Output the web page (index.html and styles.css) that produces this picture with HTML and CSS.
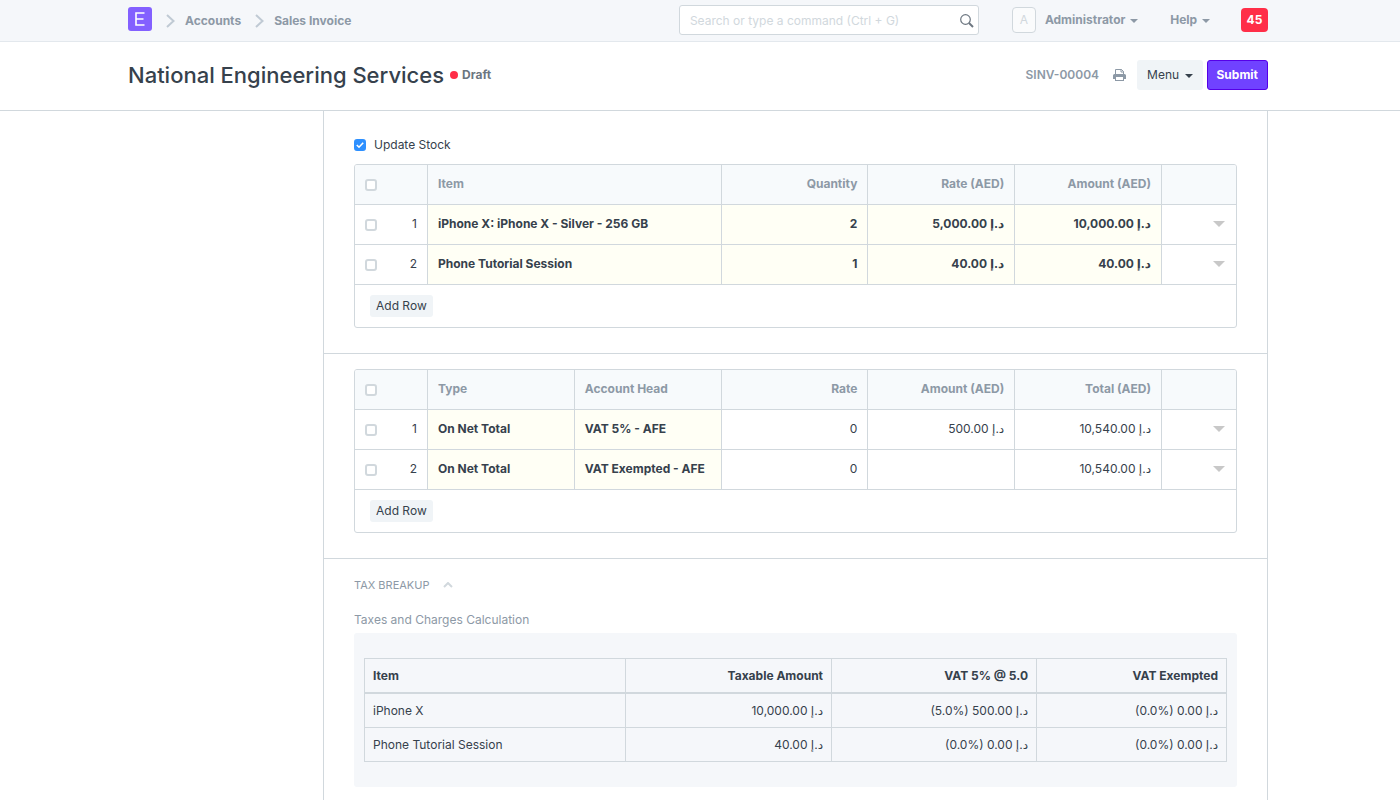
FILE: index.html
```html
<!DOCTYPE html>
<html lang="en">

<head>
    <meta charset="UTF-8">
    <meta name="viewport" content="width=device-width, initial-scale=1.0">
    <title>National Engineering Services</title>
    <link rel="stylesheet" href="styles.css">
</head>

<body>
    <header class="navbar">
        <div class="container">
            <a href="#" class="logo" aria-label="Home">
                <svg width="24" height="24" viewBox="0 0 24 24">
                    <rect width="24" height="24" rx="3" fill="#8360ff" />
                    <path d="M16.500 6H8v12h8.500M8 12h7.500" fill="none" stroke="#fff" stroke-width="1.600" />
                </svg>
            </a>
            <nav class="breadcrumbs">
                <svg class="chevron" width="9" height="14" viewBox="0 0 9 14"><path d="M1 1l6.500 6L1 13" /></svg>
                <a href="#">Accounts</a>
                <svg class="chevron" width="9" height="14" viewBox="0 0 9 14"><path d="M1 1l6.500 6L1 13" /></svg>
                <a href="#">Sales Invoice</a>
            </nav>
            <form class="search">
                <input type="text" aria-label="Search" placeholder="Search or type a command (Ctrl + G)">
                <svg width="14" height="14" viewBox="0 0 14 14">
                    <circle cx="5.500" cy="5.500" r="4.800" />
                    <path d="M9 9l4 4" stroke-width="2" />
                </svg>
            </form>
            <span class="avatar">A</span>
            <button class="nav-link user">Administrator <span class="caret"></span></button>
            <button class="nav-link help">Help <span class="caret"></span></button>
            <a href="#" class="badge">45</a>
        </div>
    </header>

    <div class="page-head">
        <div class="container">
            <h1>National Engineering Services</h1>
            <span class="indicator">Draft</span>
            <span class="doc-id">SINV-00004</span>
            <button class="print" aria-label="Print">
                <svg width="13" height="12" viewBox="0 0 13 12">
                    <path d="M2.500 6V.5h6l2 2V6" fill="none" stroke="#8d99a6" />
                    <path d="M8 0v3h3" fill="none" stroke="#8d99a6" />
                    <path fill-rule="evenodd" fill="#8d99a6" d="M1.500 5h10A1.500 1.500 0 0 1 13 6.500V10h-2v2H2v-2H0V6.500A1.500 1.500 0 0 1 1.500 5zM3 8v3h7V8z" />
                </svg>
            </button>
            <button class="btn btn-menu">Menu <span class="caret"></span></button>
            <button class="btn btn-primary">Submit</button>
        </div>
    </div>

    <div class="container page-body">
        <aside class="sidebar"></aside>
        <main class="layout-main">
            <section class="form-section">
                <label class="check"><input type="checkbox" checked> Update Stock</label>
                <div class="grid">
                    <table>
                        <colgroup>
                            <col class="col-index"><col><col><col><col><col><col class="col-open">
                        </colgroup>
                        <thead>
                            <tr>
                                <th><div class="index"><input type="checkbox" aria-label="Select all"></div></th>
                                <th colspan="2">Item</th>
                                <th class="num">Quantity</th>
                                <th class="num">Rate (AED)</th>
                                <th class="num">Amount (AED)</th>
                                <th></th>
                            </tr>
                        </thead>
                        <tbody>
                            <tr>
                                <td><div class="index"><input type="checkbox" aria-label="Select row 1"> 1</div></td>
                                <td class="reqd" colspan="2">iPhone X: iPhone X - Silver - 256 GB</td>
                                <td class="reqd num">2</td>
                                <td class="reqd num">5,000.00 د.إ</td>
                                <td class="reqd num">10,000.00 د.إ</td>
                                <td><button class="open-row" aria-label="Open row 1"></button></td>
                            </tr>
                            <tr>
                                <td><div class="index"><input type="checkbox" aria-label="Select row 2"> 2</div></td>
                                <td class="reqd" colspan="2">Phone Tutorial Session</td>
                                <td class="reqd num">1</td>
                                <td class="reqd num">40.00 د.إ</td>
                                <td class="reqd num">40.00 د.إ</td>
                                <td><button class="open-row" aria-label="Open row 2"></button></td>
                            </tr>
                        </tbody>
                    </table>
                    <div class="grid-footer"><button class="btn-xs">Add Row</button></div>
                </div>
            </section>

            <section class="form-section">
                <div class="grid">
                    <table>
                        <colgroup>
                            <col class="col-index"><col><col><col><col><col><col class="col-open">
                        </colgroup>
                        <thead>
                            <tr>
                                <th><div class="index"><input type="checkbox" aria-label="Select all"></div></th>
                                <th>Type</th>
                                <th>Account Head</th>
                                <th class="num">Rate</th>
                                <th class="num">Amount (AED)</th>
                                <th class="num">Total (AED)</th>
                                <th></th>
                            </tr>
                        </thead>
                        <tbody>
                            <tr>
                                <td><div class="index"><input type="checkbox" aria-label="Select row 1"> 1</div></td>
                                <td class="reqd">On Net Total</td>
                                <td class="reqd">VAT 5% - AFE</td>
                                <td class="num">0</td>
                                <td class="num">500.00 د.إ</td>
                                <td class="num">10,540.00 د.إ</td>
                                <td><button class="open-row" aria-label="Open row 1"></button></td>
                            </tr>
                            <tr>
                                <td><div class="index"><input type="checkbox" aria-label="Select row 2"> 2</div></td>
                                <td class="reqd">On Net Total</td>
                                <td class="reqd">VAT Exempted - AFE</td>
                                <td class="num">0</td>
                                <td class="num"></td>
                                <td class="num">10,540.00 د.إ</td>
                                <td><button class="open-row" aria-label="Open row 2"></button></td>
                            </tr>
                        </tbody>
                    </table>
                    <div class="grid-footer"><button class="btn-xs">Add Row</button></div>
                </div>
            </section>

            <section class="form-section">
                <h2 class="section-head">
                    Tax Breakup
                    <svg width="10" height="6" viewBox="0 0 10 6"><path d="M1 5l4-4 4 4" /></svg>
                </h2>
                <div class="field-label">Taxes and Charges Calculation</div>
                <div class="tax-box">
                    <table class="tax-table">
                        <thead>
                            <tr>
                                <th>Item</th>
                                <th class="num col-taxable">Taxable Amount</th>
                                <th class="num col-vat">VAT 5% @ 5.0</th>
                                <th class="num col-exempt">VAT Exempted</th>
                            </tr>
                        </thead>
                        <tbody>
                            <tr>
                                <td>iPhone X</td>
                                <td class="num">10,000.00 د.إ</td>
                                <td class="num">(5.0%) 500.00 د.إ</td>
                                <td class="num">(0.0%) 0.00 د.إ</td>
                            </tr>
                            <tr>
                                <td>Phone Tutorial Session</td>
                                <td class="num">40.00 د.إ</td>
                                <td class="num">(0.0%) 0.00 د.إ</td>
                                <td class="num">(0.0%) 0.00 د.إ</td>
                            </tr>
                        </tbody>
                    </table>
                </div>
            </section>
        </main>
    </div>
</body>

</html>
```
FILE: styles.css
```css
* {
    box-sizing: border-box;
}

body {
    margin: 0;
    font-family: Inter, "DejaVu Sans", sans-serif;
    font-size: 12px;
    line-height: 18px;
    color: #36414c;
    background: #fff;
}

a {
    color: inherit;
    text-decoration: none;
}

button,
input {
    font: inherit;
    color: inherit;
}

button {
    border: none;
    background: none;
    padding: 0;
    cursor: pointer;
}

.navbar,
.page-head {
    padding-right: 4px;
}

.container {
    max-width: 1140px;
    margin: 0 auto;
    display: flex;
    align-items: center;
}

/* navbar */
.navbar {
    background: #f5f7fa;
    border-bottom: 1px solid #e3e8ed;
    color: #8d99a6;
    font-weight: 700;
}

.navbar .container {
    height: 41px;
    padding-bottom: 1px;
}

.logo {
    display: flex;
    margin-bottom: 2px;
}

.breadcrumbs {
    display: flex;
    align-items: center;
    margin-right: auto;
    padding-top: 1px;
}

.chevron {
    margin: 0 10px 0 14px;
    fill: none;
    stroke: #c0cad4;
    stroke-width: 2;
}

.search {
    position: relative;
    width: 300px;
    margin-right: 33px;
}

.search input {
    display: block;
    width: 100%;
    height: 30px;
    padding: 0 36px 0 10px;
    border: 1px solid #d1d8dd;
    border-radius: 3px;
    background: #fff;
    font-weight: 400;
    outline: none;
}

.search input::placeholder {
    color: #d1d8dd;
    opacity: 1;
}

.search svg {
    position: absolute;
    right: 5px;
    top: 9px;
    fill: none;
    stroke: #6c7680;
    stroke-width: 1.2;
}

.avatar {
    width: 24px;
    height: 26px;
    line-height: 24px;
    border: 1px solid #d1d8dd;
    border-radius: 4px;
    background: #fafbfc;
    color: #d1d8dd;
    text-align: center;
    font-weight: 400;
}

.nav-link {
    font-weight: 700;
    margin-left: 9px;
}

.nav-link.help {
    margin-left: 32px;
}

.caret {
    display: inline-block;
    vertical-align: middle;
    margin-left: 2px;
    border-top: 4px solid;
    border-left: 4px solid transparent;
    border-right: 4px solid transparent;
}

.badge {
    margin-left: 31px;
    width: 27px;
    height: 24px;
    line-height: 24px;
    border-radius: 4px;
    background: #ff2e48;
    color: #fff;
    text-align: center;
    font-weight: 700;
}

/* page head */
.page-head {
    border-bottom: 1px solid #d1d8dd;
}

.page-head .container {
    height: 68px;
    padding-bottom: 2px;
}

.page-head h1 {
    margin: 0;
    font-size: 22px;
    line-height: 32px;
    font-weight: 500;
}

.indicator {
    display: flex;
    align-items: center;
    margin: 0 auto 0 6px;
    color: #6c7680;
    font-weight: 700;
}

.indicator::before {
    content: "";
    width: 8px;
    height: 8px;
    margin-right: 4px;
    border-radius: 50%;
    background: #ff2e48;
}

.doc-id {
    color: #8d99a6;
    font-weight: 600;
}

.print {
    display: flex;
    margin: 0 11px 0 14px;
}

.btn {
    height: 30px;
    padding: 0 9px;
    border: 1px solid transparent;
    border-radius: 3px;
}

.btn-menu {
    background: #f0f4f7;
    margin-right: 4px;
}

.btn-primary {
    background: #7042ff;
    border-color: #5600e8;
    color: #fff;
    font-weight: 700;
}

/* form */
.page-body {
    align-items: stretch;
    max-width: 1144px;
    padding-right: 4px;
}

.sidebar {
    flex: 0 0 195px;
}

.layout-main {
    flex: 1;
    border: 1px solid #d1d8dd;
    border-width: 0 1px;
}

.form-section {
    padding: 15px 30px 25px;
}

.form-section + .form-section {
    border-top: 1px solid #d1d8dd;
}

.check {
    display: flex;
    align-items: center;
    gap: 8px;
    padding: 10px 0;
}

input[type="checkbox"] {
    appearance: none;
    flex: none;
    display: block;
    width: 12px;
    height: 12px;
    margin: 0;
    border: 2px solid #d1d8dd;
    border-radius: 3px;
    background: #fff;
}

input[type="checkbox"]:checked {
    border-color: #2e90ff;
    background: #2e90ff url("data:image/svg+xml,%3Csvg xmlns='http://www.w3.org/2000/svg' viewBox='0 0 8 8'%3E%3Cpath d='M.8 4l2.200 2.200L7.200 1.800' fill='none' stroke='%23fff' stroke-width='1.600'/%3E%3C/svg%3E");
}

.grid {
    border: 1px solid #d1d8dd;
    border-radius: 3px;
    overflow: hidden;
}

table {
    width: 100%;
    table-layout: fixed;
}

.grid table {
    border-spacing: 0;
}

.col-index {
    width: 73px;
}

.col-open {
    width: 74px;
}

.grid th,
.grid td {
    height: 40px;
    padding: 0 10px 2px;
    border: 1px solid #d1d8dd;
    border-width: 0 1px 1px 0;
    text-align: left;
    white-space: nowrap;
}

.grid th:last-child,
.grid td:last-child {
    border-right: none;
}

.grid th {
    background: #f7fafc;
    color: #8d99a6;
    font-weight: 700;
}

.grid .num,
.tax-table .num {
    text-align: right;
}

.grid .reqd {
    background: #fffff5;
    font-weight: 700;
}

.index {
    display: flex;
    align-items: center;
    justify-content: space-between;
    height: 18px;
}

.index input {
    margin-top: 2px;
}

.open-row {
    display: block;
    margin: 0 1px 0 auto;
    border-top: 6px solid #c8c8c8;
    border-left: 6px solid transparent;
    border-right: 6px solid transparent;
}

.grid-footer {
    padding: 10px 15px;
}

.btn-xs {
    display: block;
    height: 22px;
    padding: 0 6px;
    border-radius: 3px;
    background: #f0f4f7;
}

.section-head {
    display: flex;
    align-items: center;
    gap: 14px;
    margin: 2px 0 17px;
    font-size: 11px;
    line-height: 18px;
    font-weight: 400;
    text-transform: uppercase;
    color: #8d99a6;
}

.section-head svg {
    fill: none;
    stroke: #d1d8dd;
    stroke-width: 2;
}

.field-label {
    margin-bottom: 4px;
    color: #8d99a6;
}

.tax-box {
    padding: 25px 10px;
    border-radius: 3px;
    background: #f5f7fa;
}

.tax-table {
    border-collapse: collapse;
    line-height: 17px;
}

.tax-table th,
.tax-table td {
    padding: 8px;
    border: 1px solid #d1d8dd;
    text-align: left;
}

.tax-table th {
    border-bottom-width: 2px;
    font-weight: 700;
}

.col-taxable {
    width: 206px;
}

.col-vat {
    width: 205px;
}

.col-exempt {
    width: 190px;
}
```
